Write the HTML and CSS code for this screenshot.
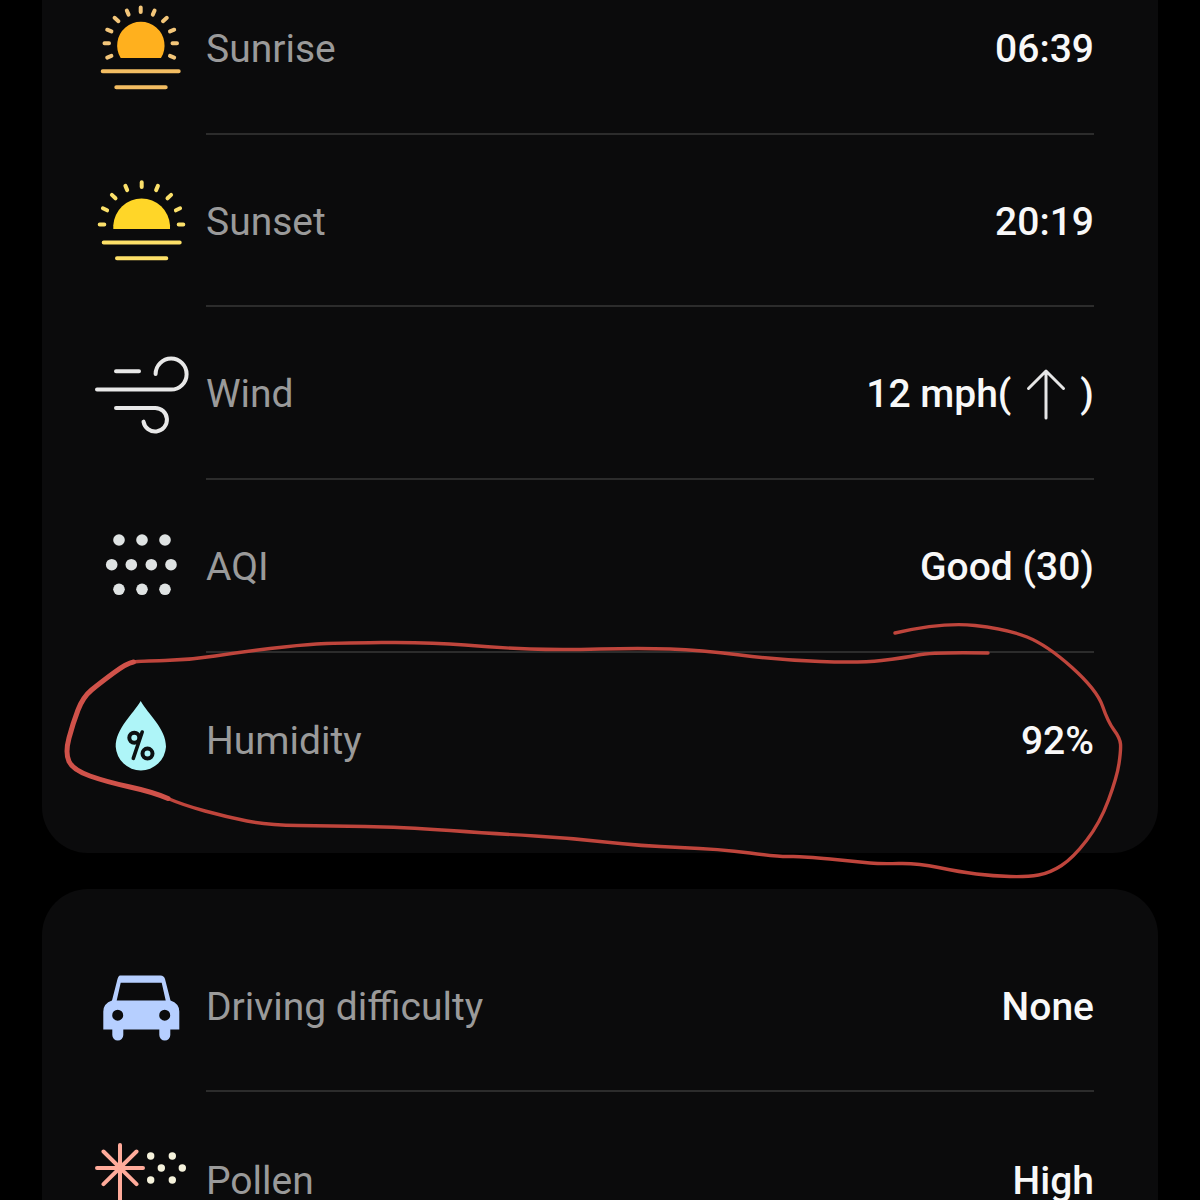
FILE: index.html
```html
<!DOCTYPE html>
<html lang="en">
<head>
<meta charset="utf-8">
<title>Weather details</title>
<link rel="stylesheet" href="styles.css">
</head>
<body>
<div class="screen">
  <div class="stack">
    <section class="card card-first">
      <div class="row">
        <svg class="icon" viewBox="92 -1 100 100">
          <path class="sunrise-sun" d="M120.7 58 A23.7 23.7 0 1 1 161 58 Z"/>
          <g class="sunrise-rays">
            <path d="M140.7 7.5V12M126.8 10.5L128.6 14.6M154.6 10.5L152.8 14.6M114.6 17.8L118.4 21.2M166.8 17.8L163 21.2M107.2 29.7L111.4 31.4M174.2 29.7L170 31.4M104.5 43.3H109M172.5 43.3H177M107.2 57.6L111.4 55.9M174.2 57.6L170 55.9"/>
          </g>
          <path class="sunrise-lines" d="M102.7 71.3H178.7M116.3 87.3H165.7"/>
        </svg>
        <div class="row-body"><span class="label">Sunrise</span><span class="value">06:39</span></div>
      </div>
      <div class="row">
        <svg class="icon" viewBox="92 171.7 100 100">
          <path class="sunset-sun" d="M113.3 228.7V225A28.4 28.4 0 0 1 170 225V228.7Z"/>
          <path class="sunset-rays" d="M141.7 182V186.6M125.4 185.6L127.2 189.8M157.9 185.6L156.1 189.8M111.9 194.6L115.5 198M171.1 194.6L167.5 198M102.9 208L107.1 210M180.1 208L175.9 210M99.7 224.3H104.3M178.7 224.3H183.3"/>
          <path class="sunset-lines" d="M103.7 242.3H179.7M117 258H166.3"/>
        </svg>
        <div class="row-body"><span class="label">Sunset</span><span class="value">20:19</span></div>
      </div>
      <div class="row">
        <svg class="icon" viewBox="92 344.4 100 100">
          <path class="wind" d="M97 390H171A15.5 15.5 0 1 0 155.6 374.5M116 371.7H139M116 408.3H155A11.8 11.8 0 1 1 143.5 422"/>
        </svg>
        <div class="row-body"><span class="label">Wind</span><span class="value">12 mph(<svg class="arrow" viewBox="0 0 69 52"><path d="M35 50V3M17.500 20.500L35 3L52.500 20.500"/></svg>)</span></div>
      </div>
      <div class="row">
        <svg class="icon" viewBox="92 517 100 100">
          <g class="aqi">
            <circle cx="119" cy="540" r="5.8"/><circle cx="142" cy="540" r="5.8"/><circle cx="165" cy="540" r="5.8"/>
            <circle cx="111.700" cy="564.700" r="5.800"/><circle cx="131.300" cy="564.700" r="5.800"/><circle cx="151.300" cy="564.700" r="5.800"/><circle cx="171" cy="564.700" r="5.800"/>
            <circle cx="119" cy="589.300" r="5.800"/><circle cx="142" cy="589.300" r="5.800"/><circle cx="165" cy="589.300" r="5.800"/>
          </g>
        </svg>
        <div class="row-body"><span class="label">AQI</span><span class="value">Good (30)</span></div>
      </div>
      <div class="row">
        <svg class="icon" viewBox="92 689.7 100 100">
          <path class="drop" d="M140.700 700.700C133 714 115.700 728 115.700 746.500A25.200 25.200 0 0 0 166 746.500C166 728 148 714 140.700 700.700Z"/>
          <g class="percent">
            <circle cx="134.300" cy="737.500" r="5"/><circle cx="147.500" cy="753.300" r="5"/><path d="M142.200 731.700L133.300 758"/>
          </g>
        </svg>
        <div class="row-body"><span class="label">Humidity</span><span class="value">92%</span></div>
      </div>
    </section>
    <section class="card card-second">
      <div class="row">
        <svg class="icon" viewBox="92 956.500 100 100">
          <path class="car" fill-rule="evenodd" d="M120 976H160.500Q164 976 165 979.500L170.500 1001Q179.300 1004 179.300 1012V1030H170.300V1035.500A5.500 5.500 0 0 1 159.300 1035.500V1030H123.300V1035.500A5.500 5.500 0 0 1 112.300 1035.500V1030H103.300V1012Q103.300 1004 112 1001L117.500 979.500Q118.500 976 120 976ZM120.700 983.300L116.700 1001H165.700L161.700 983.300ZM117.700 1010.200A5.500 5.500 0 1 0 117.700 1021.200A5.500 5.500 0 1 0 117.700 1010.200ZM164.700 1010.200A5.500 5.500 0 1 0 164.700 1021.200A5.500 5.500 0 1 0 164.700 1010.200Z"/>
        </svg>
        <div class="row-body"><span class="label">Driving difficulty</span><span class="value">None</span></div>
      </div>
      <div class="row">
        <svg class="icon" viewBox="92 1130 100 100">
          <path class="pollen-star" d="M120 1146V1204M97 1169H143M103.500 1152.500L136.500 1185.200M136.500 1152.500L103.500 1185.200"/>
          <g class="pollen-dots">
            <circle cx="150.700" cy="1157" r="3.700"/><circle cx="172.300" cy="1157" r="3.700"/><circle cx="161.300" cy="1169" r="3.700"/><circle cx="182.300" cy="1169" r="3.700"/><circle cx="150.700" cy="1181" r="3.700"/><circle cx="172.300" cy="1181" r="3.700"/>
          </g>
        </svg>
        <div class="row-body"><span class="label">Pollen</span><span class="value">High</span></div>
      </div>
    </section>
  </div>
  <svg class="scribble" viewBox="0 0 1200 1200">
    <path d="M895 633Q943 622 975 625.500Q1007 629 1027 637Q1047 645 1072 667.500Q1097 690 1102.500 706Q1108 722 1114 730Q1120 738 1120.500 744Q1121 750 1119 763.500Q1117 777 1108.500 800Q1100 823 1086.500 840.500Q1073 858 1061.500 865.500Q1050 873 1038.500 875Q1027 877 1010 876.500Q993 876 976.500 874Q960 872 938.500 867.500Q917 863 898.500 863.500Q880 864 870 863Q860 862 830 859Q800 856 790 856.500Q780 857 750 853Q720 849 680 847.500Q640 846 605 842Q570 838 535 836Q500 834 450 830.500Q400 827 365 826.500Q330 826 298.500 825.500Q267 825 247 821Q227 817 205 811Q183 805 168 798.500Q153 792 130 787Q107 782 90 776Q73 770 69 761.500Q65 753 69 738Q73 723 78 710Q83 697 91.500 690Q100 683 113.500 673Q127 663 133.500 662Q140 661 165 660.500Q190 660 215 656Q240 652 270 648.500Q300 645 316.500 644Q333 643 381.500 642.500Q430 642 465 645Q500 648 530 649Q560 650 600 649Q640 648 670 649Q700 650 740 655Q780 660 820 661.500Q860 663 881.500 660.500Q903 658 918 655Q933 652 988 653"/>
    <path class="scribble-heavy" d="M168 798.500Q153 792 130 787Q107 782 90 776Q73 770 69 761.500Q65 753 69 738Q73 723 78 710Q83 697 91.500 690Q100 683 113.500 673Q127 663 133.500 662"/>
  </svg>
</div>
</body>
</html>
```

FILE: styles.css
```css
* { box-sizing: border-box; }
html, body { margin: 0; padding: 0; background: #000; }
.screen { position: relative; width: 1200px; height: 1200px; overflow: hidden; background: #000; }
.stack { display: flex; flex-direction: column; gap: 36px; margin: -65px 42px 0; }
.card { background: #0b0b0c; border-radius: 46px; padding: 27px 64px 28px 50px; }
.card-second { padding-top: 30px; }
.row { display: flex; gap: 14px; height: 172.7px; }
.icon { width: 100px; height: 100px; flex: none; align-self: center; margin-top: 1px; overflow: visible; }
.row-body { flex: 1; display: flex; align-items: center; justify-content: space-between; padding-top: 3px; border-bottom: 2px solid #2c2c2c; font-family: Roboto, sans-serif; font-size: 39px; }
.card-second .row-body { padding-top: 5px; }
.row:last-child .row-body { border-bottom: none; }
.label { color: #9a9a9a; }
.value { color: #f8f8f8; font-weight: 500; display: inline-flex; align-items: center; }
.arrow { width: 69px; height: 52px; flex: none; }
.arrow path { fill: none; stroke: #e6e6e6; stroke-width: 3; stroke-linecap: round; stroke-linejoin: round; }
.sunrise-sun { fill: #ffb01e; }
.sunrise-rays path { fill: none; stroke: #f3c67a; stroke-width: 4; stroke-linecap: round; }
.sunrise-lines { fill: none; stroke: #f3bd62; stroke-width: 4; stroke-linecap: round; }
.sunset-sun { fill: #ffd628; }
.sunset-rays { fill: none; stroke: #fbe06a; stroke-width: 4; stroke-linecap: round; }
.sunset-lines { fill: none; stroke: #fde068; stroke-width: 4; stroke-linecap: round; }
.wind { fill: none; stroke: #e8e8e8; stroke-width: 4; stroke-linecap: round; }
.aqi circle { fill: #dfe3e3; }
.drop { fill: #aef5f8; }
.percent circle { fill: none; stroke: #0c1112; stroke-width: 4; }
.percent path { fill: none; stroke: #0c1112; stroke-width: 3.6; stroke-linecap: round; }
.car { fill: #b6cfff; }
.pollen-star { fill: none; stroke: #ffab9b; stroke-width: 4; stroke-linecap: round; }
.pollen-dots circle { fill: #f5f2dc; }
.scribble { position: absolute; top: 0; left: 0; width: 1200px; height: 1200px; pointer-events: none; }
.scribble path { fill: none; stroke: #bf453c; stroke-width: 3.4; stroke-linecap: round; stroke-linejoin: round; }
.scribble .scribble-heavy { stroke: #d0524a; stroke-width: 5; }
```
